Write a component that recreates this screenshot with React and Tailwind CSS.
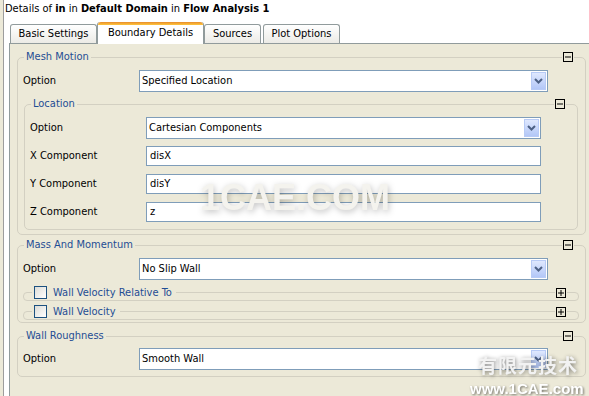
import React from "react";

const Chevron = () => (
  <svg width="9" height="6" viewBox="0 0 9 6">
    <path d="M1 1 L4.5 4.5 L8 1" fill="none" stroke="#4d6185" strokeWidth="2" />
  </svg>
);

const Box = ({ plus }) => (
  <svg width="10" height="10" viewBox="0 0 10 10" className="block">
    <rect x="0.5" y="0.5" width="9" height="9" fill="#ece9d8" stroke="#000" />
    <path d="M2 5 H8" stroke="#000" />
    {plus && <path d="M5 2 V8" stroke="#000" />}
  </svg>
);

function Select({ value, w }) {
  return (
    <div className={`flex h-[22px] items-stretch border border-[#7f9db9] bg-white ${w}`}>
      <span className="flex-1 pl-[2px] leading-[20px] text-black">{value}</span>
      <span className="m-[1px] flex w-[15px] items-center justify-center border border-[#b8cbf6] bg-gradient-to-b from-[#dfe8fe] to-[#b3c7f7]">
        <Chevron />
      </span>
    </div>
  );
}

function Field({ value }) {
  return (
    <div className="h-[20px] w-[395px] border border-[#7f9db9] bg-white pl-[3px] leading-[18px] text-black">
      {value}
    </div>
  );
}

function Row({ label, children }) {
  return (
    <div className="flex items-center pl-[5px]">
      <span className="w-[116px] text-black">{label}</span>
      {children}
    </div>
  );
}

function Group({ title, className, children }) {
  return (
    <div className={`relative rounded-[5px] border border-[#d3d0c2] ${className}`}>
      <span className="absolute -top-[8px] left-[6px] bg-[#ece9d8] px-[2px] leading-[14px] text-[#1f4d94]">
        {title}
      </span>
      <span className="absolute -top-[6px] right-[11px] bg-[#ece9d8] px-[1px]">
        <Box />
      </span>
      {children}
    </div>
  );
}

function Collapsed({ title, className }) {
  return (
    <div className={`relative ml-[5px] mr-[6px] h-[9px] rounded-[4px] border border-[#d3d0c2] ${className}`}>
      <div className="absolute -top-[7px] left-[8px] flex h-[13px] items-center gap-[6px] bg-[#ece9d8] pl-[2px] pr-[4px]">
        <span className="h-[13px] w-[13px] border border-[#1c5180] bg-gradient-to-br from-[#dcdcd7] to-white" />
        <span className="leading-[13px] text-[#1f4d94]">{title}</span>
      </div>
      <span className="absolute -top-[5px] right-[11px] bg-[#ece9d8] px-[1px]">
        <Box plus />
      </span>
    </div>
  );
}

export default function App() {
  return (
    <div className="relative h-[396px] w-[589px] overflow-hidden bg-[#ece9d8] text-[11px] font-[family-name:'DejaVu_Sans_Condensed','Liberation_Sans',sans-serif]">
      <div className="ml-[3px] flex h-full w-[600px] flex-col border-l border-[#9d9d9d] bg-white">
        {/* header */}
        <div className="h-[22px] pl-[1px] pt-[2px] leading-[14px] text-black">
          Details of <b>in</b> in <b>Default Domain</b> in <b>Flow Analysis 1</b>
        </div>

        {/* tabs */}
        <div className="relative z-10 ml-[6px] flex h-[21px] items-end">
          <div className="flex h-[19px] w-[87px] items-center justify-center rounded-t-[3px] border border-b-0 border-[#919b9c] bg-gradient-to-b from-white to-[#ecebe6]">
            Basic Settings
          </div>
          <div className="-mb-px flex h-[22px] w-[107px] flex-col rounded-t-[3px] border-x border-[#919b9c] bg-white">
            <div className="h-[3px] rounded-t-[3px] bg-gradient-to-b from-[#e68b2c] to-[#ffc73c]" />
            <div className="flex flex-1 items-center justify-center pb-[2px]">Boundary Details</div>
          </div>
          <div className="flex h-[19px] w-[57px] items-center justify-center rounded-t-[3px] border border-b-0 border-[#919b9c] bg-gradient-to-b from-white to-[#ecebe6]">
            Sources
          </div>
          <div className="ml-[2px] flex h-[19px] w-[77px] items-center justify-center rounded-t-[3px] border border-b-0 border-[#919b9c] bg-gradient-to-b from-white to-[#ecebe6]">
            Plot Options
          </div>
        </div>

        {/* panel */}
        <div className="ml-[5px] flex-1 border-l border-t border-[#919b9c] bg-[#ece9d8] pl-[7px]">
          <Group title="Mesh Motion" className="mt-[13px] w-[569px] pb-[4px] pt-[12px]">
            <Row label="Option">
              <Select value="Specified Location" w="w-[409px]" />
            </Row>
            <Group title="Location" className="ml-[6px] mr-[7px] mt-[12px] pb-[7px] pt-[12px]">
              <div className="flex flex-col gap-[8px]">
                <div className="mb-[-1px]">
                  <Row label="Option">
                    <Select value="Cartesian Components" w="w-[395px]" />
                  </Row>
                </div>
                <Row label="X Component">
                  <Field value="disX" />
                </Row>
                <Row label="Y Component">
                  <Field value="disY" />
                </Row>
                <Row label="Z Component">
                  <Field value="z" />
                </Row>
              </div>
            </Group>
          </Group>

          <Group title="Mass And Momentum" className="mt-[10px] w-[569px] pb-[2px] pt-[12px]">
            <Row label="Option">
              <Select value="No Slip Wall" w="w-[409px]" />
            </Row>
            <Collapsed title="Wall Velocity Relative To" className="mt-[12px]" />
            <Collapsed title="Wall Velocity" className="mt-[10px]" />
          </Group>

          <Group title="Wall Roughness" className="mt-[13px] w-[569px] pb-[6px] pt-[11px]">
            <Row label="Option">
              <Select value="Smooth Wall" w="w-[409px]" />
            </Row>
          </Group>
        </div>
      </div>

      {/* watermarks */}
      <div className="pointer-events-none absolute left-[200px] top-[180px] font-['Liberation_Sans',sans-serif] text-[36px] font-bold leading-none text-[#f4f3ee] drop-shadow-[1px_2px_3px_rgba(0,0,0,0.25)]">
        1CAE.COM
      </div>
      <div className="pointer-events-none absolute left-[478px] top-[355px] font-['Noto_Sans_CJK_SC',sans-serif] text-[19px] font-bold leading-none tracking-[1px] text-[#f2f2f2] drop-shadow-[1px_1px_2px_rgba(0,0,0,0.45)]">
        有限元技术
      </div>
      <div className="pointer-events-none absolute left-[470px] top-[381px] font-['Liberation_Sans',sans-serif] text-[15px] font-bold leading-none text-white drop-shadow-[1px_1px_1px_rgba(0,0,0,0.5)]">
        www.1CAE.com
      </div>
    </div>
  );
}
